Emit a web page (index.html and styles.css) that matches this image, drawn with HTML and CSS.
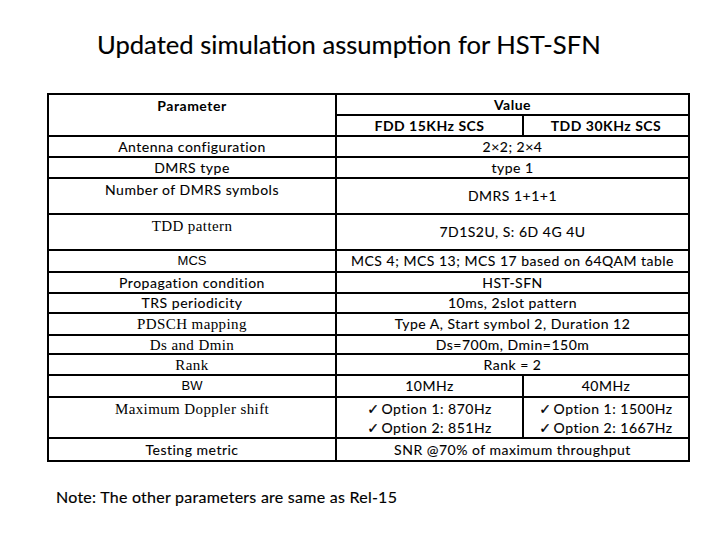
FILE: index.html
```html
<!DOCTYPE html>
<html>
<head>
<meta charset="utf-8">
<link rel="stylesheet" href="styles.css">
</head>
<body>
<div class="slide">
  <h1 class="title">Updated simulation assumption for HST-SFN</h1>
  <table class="params">
    <colgroup>
      <col class="c-param">
      <col class="c-fdd">
      <col class="c-tdd">
    </colgroup>
    <tr class="r21">
      <td rowspan="2" class="top b">Parameter</td>
      <td colspan="2" class="b">Value</td>
    </tr>
    <tr class="r21">
      <td class="b">FDD 15KHz SCS</td>
      <td class="b">TDD 30KHz SCS</td>
    </tr>
    <tr class="r21">
      <td>Antenna configuration</td>
      <td colspan="2">2×2; 2×4</td>
    </tr>
    <tr class="r21">
      <td>DMRS type</td>
      <td colspan="2">type 1</td>
    </tr>
    <tr class="r36">
      <td class="top">Number of DMRS symbols</td>
      <td colspan="2">DMRS 1+1+1</td>
    </tr>
    <tr class="r36">
      <td class="top serif">TDD pattern</td>
      <td colspan="2">7D1S2U, S: 6D 4G 4U</td>
    </tr>
    <tr class="r22">
      <td class="thin">MCS</td>
      <td colspan="2">MCS 4; MCS 13; MCS 17 based on 64QAM table</td>
    </tr>
    <tr class="r21">
      <td>Propagation condition</td>
      <td colspan="2">HST-SFN</td>
    </tr>
    <tr class="r20">
      <td>TRS periodicity</td>
      <td colspan="2">10ms, 2slot pattern</td>
    </tr>
    <tr class="r22">
      <td class="serif">PDSCH mapping</td>
      <td colspan="2">Type A, Start symbol 2, Duration 12</td>
    </tr>
    <tr class="r19">
      <td class="serif">Ds and Dmin</td>
      <td colspan="2">Ds=700m, Dmin=150m</td>
    </tr>
    <tr class="r21">
      <td class="serif">Rank</td>
      <td colspan="2">Rank = 2</td>
    </tr>
    <tr class="r22">
      <td class="thin">BW</td>
      <td>10MHz</td>
      <td>40MHz</td>
    </tr>
    <tr class="r41">
      <td class="top serif">Maximum Doppler shift</td>
      <td class="opts"><span class="chk">✓</span>Option 1: 870Hz<br><span class="chk">✓</span>Option 2: 851Hz</td>
      <td class="opts"><span class="chk">✓</span>Option 1: 1500Hz<br><span class="chk">✓</span>Option 2: 1667Hz</td>
    </tr>
    <tr class="r23">
      <td>Testing metric</td>
      <td colspan="2">SNR @70% of maximum throughput</td>
    </tr>
  </table>
  <p class="note">Note: The other parameters are same as Rel-15</p>
</div>
</body>
</html>
```

FILE: styles.css
```css
html, body {
  margin: 0;
  padding: 0;
  background: #ffffff;
}

.slide {
  width: 720px;
  height: 540px;
  padding-top: 26px;
  box-sizing: border-box;
  font-family: Lato, "Liberation Sans", sans-serif;
  color: #000;
}

.title {
  margin: 0 0 0 97px;
  font-size: 25.6px;
  font-weight: normal;
  line-height: 36px;
  height: 36px;
  -webkit-text-stroke: 0.15px #000;
}

.params {
  margin: 31px 0 0 47px;
  border-collapse: collapse;
  table-layout: fixed;
  width: 641px;
  font-size: 14px;
  letter-spacing: 0.5px;
}

.c-param { width: 288px; }
.c-fdd { width: 187px; }
.c-tdd { width: 166px; }

.params td {
  border: 2px solid #000;
  padding: 0;
  text-align: center;
  vertical-align: middle;
  line-height: 16px;
  white-space: nowrap;
  -webkit-text-stroke: 0.1px #000;
}

.params td.top {
  vertical-align: top;
  padding-top: 3px;
}
.params td.b {
  font-weight: bold;
  -webkit-text-stroke: 0;
}
.params td.serif {
  font-family: "Liberation Serif", serif;
  font-size: 15px;
  letter-spacing: 0.4px;
  -webkit-text-stroke: 0;
}
.params td.thin {
  font-family: "Liberation Sans", sans-serif;
  font-size: 13px;
  letter-spacing: 0;
  -webkit-text-stroke: 0;
}
.params td.opts {
  line-height: 19px;
}

.r19 { height: 19px; }
.r20 { height: 20px; }
.r21 { height: 21px; }
.r22 { height: 22px; }
.r23 { height: 23px; }
.r36 { height: 36px; }
.r41 { height: 41px; }

.chk {
  display: inline-block;
  font-family: "DejaVu Sans", sans-serif;
  font-size: 14px;
  line-height: 1;
  margin-right: 2px;
  -webkit-text-stroke: 0.3px #000;
}

.note {
  margin: 25px 0 0 56px;
  font-size: 16px;
  letter-spacing: 0.25px;
  line-height: 20px;
  -webkit-text-stroke: 0.15px #000;
}
```
